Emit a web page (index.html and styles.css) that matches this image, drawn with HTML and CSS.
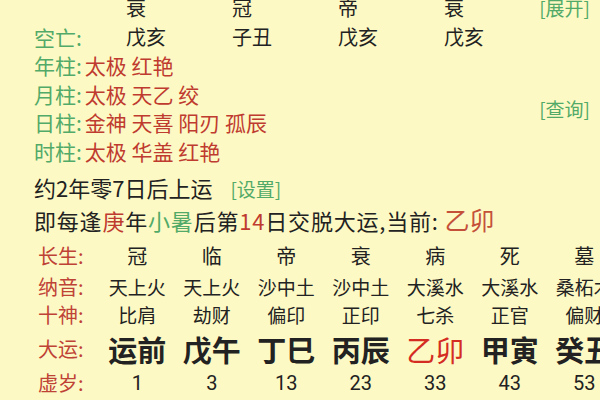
FILE: index.html
```html
<!DOCTYPE html>
<html lang="zh">
<head>
<meta charset="utf-8">
<link rel="stylesheet" href="styles.css">
</head>
<body>
<div class="page">
  <div class="top-row">
    <span class="lbl green"></span>
    <span class="cell">衰</span>
    <span class="cell">冠</span>
    <span class="cell">帝</span>
    <span class="cell cell-last">衰</span>
    <span class="link">[展开]</span>
  </div>
  <div class="top-row">
    <span class="lbl green">空亡:</span>
    <span class="cell">戊亥</span>
    <span class="cell">子丑</span>
    <span class="cell">戊亥</span>
    <span class="cell cell-last">戊亥</span>
  </div>
  <div class="pillars">
    <div class="pillar-list">
      <div class="prow"><span class="green">年柱:</span><span class="red">太极 红艳</span></div>
      <div class="prow"><span class="green">月柱:</span><span class="red">太极 天乙 绞</span></div>
      <div class="prow"><span class="green">日柱:</span><span class="red">金神 天喜 阳刃 孤辰</span></div>
      <div class="prow"><span class="green">时柱:</span><span class="red">太极 华盖 红艳</span></div>
    </div>
    <span class="link">[查询]</span>
  </div>
  <div class="line line-start">约2年零7日后上运<span class="small-link">[设置]</span></div>
  <div class="line spaced">即每逢<span class="red">庚</span>年<span class="green">小暑</span>后第<span class="red">14</span>日交脱大运,当前: <span class="current">乙卯</span></div>
  <div class="table">
    <div class="trow r-cs">
      <span class="tl">长生:</span>
      <span>冠</span><span>临</span><span>帝</span><span>衰</span><span>病</span><span>死</span><span>墓</span>
    </div>
    <div class="trow r-ny">
      <span class="tl">纳音:</span>
      <span>天上火</span><span>天上火</span><span>沙中土</span><span>沙中土</span><span>大溪水</span><span>大溪水</span><span>桑柘木</span>
    </div>
    <div class="trow r-ss">
      <span class="tl">十神:</span>
      <span>比肩</span><span>劫财</span><span>偏印</span><span>正印</span><span>七杀</span><span>正官</span><span>偏财</span>
    </div>
    <div class="trow r-dy">
      <span class="tl">大运:</span>
      <span>运前</span><span>戊午</span><span>丁巳</span><span>丙辰</span><span class="now">乙卯</span><span>甲寅</span><span>癸丑</span>
    </div>
    <div class="trow r-age">
      <span class="tl">虚岁:</span>
      <span>1</span><span>3</span><span>13</span><span>23</span><span>33</span><span>43</span><span>53</span>
    </div>
  </div>
</div>
</body>
</html>
```

FILE: styles.css
```css
html, body {
  margin: 0;
  padding: 0;
  background: #fdf9c4;
  overflow: hidden;
}
body {
  width: 600px;
  height: 400px;
  font-family: "Noto Sans CJK SC", "Noto Sans", sans-serif;
  color: #222;
}
.page {
  margin-top: -7px;
  padding-left: 34px;
  padding-right: 10px;
}
.green { color: #52aa68; }
.red { color: #bf3b2f; }

.top-row {
  display: flex;
  align-items: center;
  height: 29px;
  font-size: 20px;
  white-space: nowrap;
}
.top-row .lbl {
  width: 92px;
  flex: none;
  font-size: 21px;
}
.top-row .cell {
  width: 106px;
  flex: none;
}
.top-row .cell-last {
  width: 60px;
}
.link {
  margin-left: auto;
  flex: none;
  white-space: nowrap;
  color: #52aa68;
  font-size: 19px;
}
.pillars {
  display: flex;
  align-items: center;
}
.prow {
  height: 28.7px;
  line-height: 28.7px;
  font-size: 21px;
  display: flex;
  gap: 3px;
  white-space: nowrap;
}
.line {
  font-size: 22px;
  height: 32px;
  line-height: 32px;
  white-space: nowrap;
}
.spaced { letter-spacing: 0.8px; }
.line-start { margin-top: 5px; }
.small-link {
  color: #52aa68;
  font-size: 19px;
  margin-left: 18px;
}
.current {
  color: #c4503a;
  font-size: 25px;
  letter-spacing: 0;
}
.table {
  margin-top: 5px;
  margin-left: 4px;
}
.trow {
  display: grid;
  grid-template-columns: 62px repeat(7, 74.5px);
  align-items: center;
  white-space: nowrap;
}
.trow span {
  text-align: center;
}
.trow .tl {
  text-align: left;
  color: #bf4236;
  font-size: 20px;
}
.r-cs { height: 32px; font-size: 20px; }
.r-ny { height: 28px; font-size: 19px; }
.r-ss { height: 28px; font-size: 19px; }
.r-dy { height: 38px; font-size: 29px; font-weight: bold; }
.r-dy .tl { font-weight: normal; }
.r-dy .now { color: #d42b22; font-weight: normal; }
.r-age { height: 34px; font-size: 20px; font-family: "Roboto", "Noto Sans CJK SC", sans-serif; }
.r-age .tl { font-family: "Noto Sans CJK SC", sans-serif; }
```
